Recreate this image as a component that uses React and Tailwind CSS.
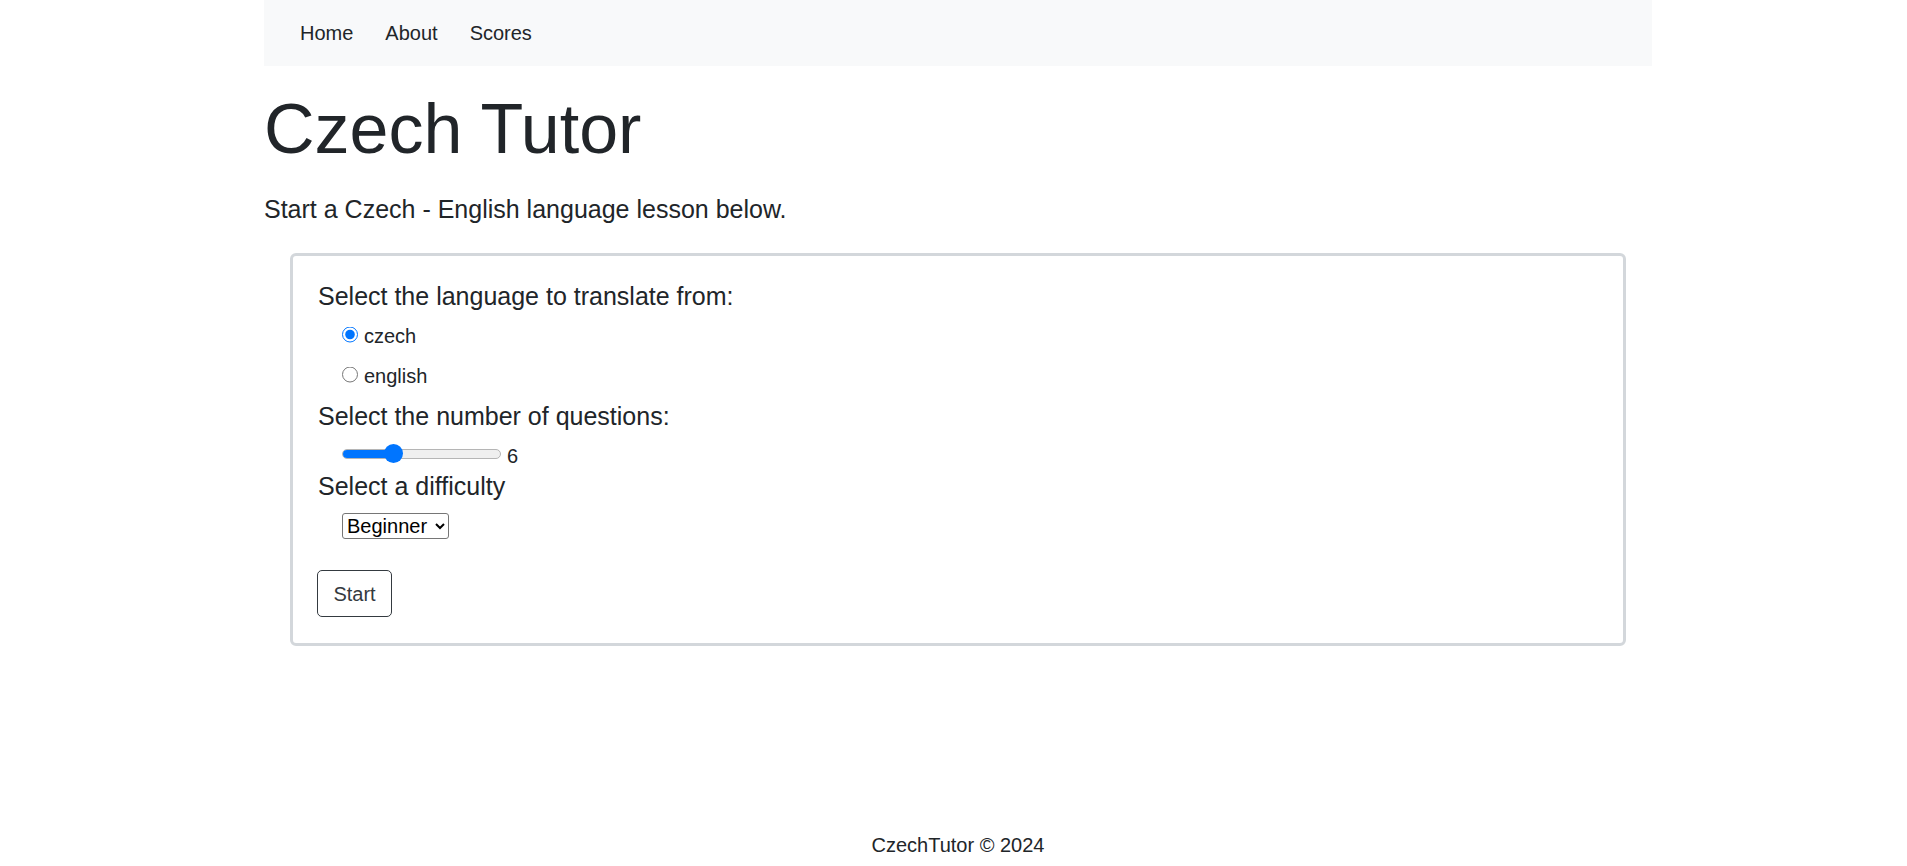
import React, { useState } from 'react';

const NavBar = () => {
  const links = ['Home', 'About', 'Scores'];
  return (
    <nav className="h-[66px] bg-[#f8f9fa] flex items-center pl-[20px]">
      {links.map((l) => (
        <a key={l} href="#" className="px-[16px] text-[20px] leading-[30px] text-[#212529]">
          {l}
        </a>
      ))}
    </nav>
  );
};

// range slider drawn by hand so the track and thumb match the browser look
const Slider = ({ value, min, max, onChange }) => {
  const pct = (value - min) / (max - min);
  const travel = 159 - 19;
  const thumbLeft = pct * travel;
  return (
    <div className="relative w-[159px] h-[19px] flex items-center">
      <div className="w-full h-[10px] rounded-full bg-[#efefef] border border-[#b5b5b5] overflow-hidden">
        <div className="h-full bg-[#0075ff]" style={{ width: thumbLeft + 9.5 }} />
      </div>
      <div
        className="absolute top-0 w-[19px] h-[19px] rounded-full bg-[#0075ff]"
        style={{ left: thumbLeft }}
      />
      <input
        type="range"
        min={min}
        max={max}
        value={value}
        onChange={(e) => onChange(Number(e.target.value))}
        className="absolute inset-0 w-full h-full opacity-0 cursor-pointer"
      />
    </div>
  );
};

const App = () => {
  const [from, setFrom] = useState('czech');
  const [count, setCount] = useState(6);
  const [level, setLevel] = useState('Beginner');

  return (
    <div className="min-h-[866px] bg-white text-[#212529] font-['Liberation_Sans',Arial,sans-serif]">
      <div className="ml-[264px] w-[1388px]">
        <NavBar />

        <h1 className="mt-[21px] text-[70px] leading-[84px] font-normal">Czech Tutor</h1>
        <p className="mt-[20px] text-[25px] leading-[37.5px]">
          Start a Czech - English language lesson below.
        </p>

        <div className="mx-[26px] mt-[24px] border-[3px] border-[#d3d7db] rounded-[6px] pl-[25px] pt-[22.5px] pb-[25.5px]">
          <div className="text-[25px] leading-[37.5px]">Select the language to translate from:</div>
          {['czech', 'english'].map((lang, i) => (
            <label
              key={lang}
              className={`flex items-center h-[30px] pl-[24px] text-[20px] leading-[30px] ${i === 0 ? 'mt-[5px]' : 'mt-[10px]'}`}
            >
              <input
                type="radio"
                name="from"
                checked={from === lang}
                onChange={() => setFrom(lang)}
                className="w-[16px] h-[16px] m-0 mr-[6px] -translate-y-[1.5px] accent-[#0075ff]"
              />
              {lang}
            </label>
          ))}

          <div className="mt-[7.5px] text-[25px] leading-[37.5px]">Select the number of questions:</div>
          <div className="flex items-start pl-[24px] mt-[8.5px]">
            <Slider value={count} min={0} max={20} onChange={setCount} />
            <span className="ml-[6px] mt-[1.5px] text-[20px] leading-[20px]">{count}</span>
          </div>

          <div className="mt-[2px] text-[25px] leading-[37.5px]">Select a difficulty</div>
          <div className="pl-[24px] mt-[8px]">
            <select
              value={level}
              onChange={(e) => setLevel(e.target.value)}
              className="h-[26px] w-[107px] border border-[#767676] rounded-[3px] text-[20px] leading-[24px] text-black bg-white"
            >
              <option>Beginner</option>
              <option>Intermediate</option>
              <option>Advanced</option>
            </select>
          </div>

          <button className="mt-[30px] -ml-[1px] h-[47px] w-[75px] border border-[#343a40] rounded-[5px] text-[20px] text-[#343a40]">
            Start
          </button>
        </div>

        <footer className="mt-[184px] text-center text-[20px] leading-[30px]">CzechTutor © 2024</footer>
      </div>
    </div>
  );
};

export default App;
